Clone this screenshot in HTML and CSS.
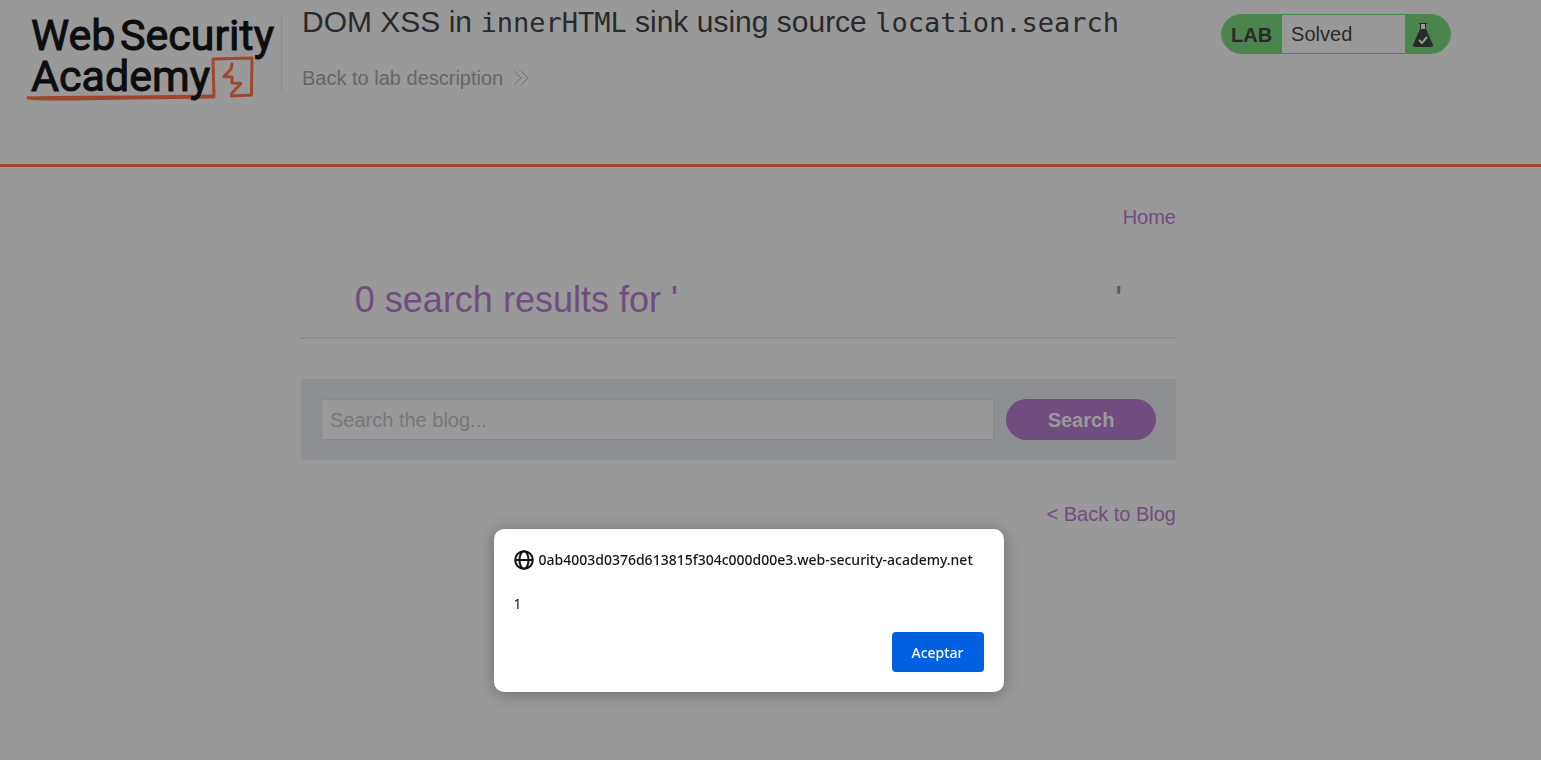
FILE: index.html
```html
<!DOCTYPE html>
<html lang="en">
<head>
<meta charset="utf-8">
<meta name="viewport" content="width=device-width, initial-scale=1">
<title>DOM XSS in innerHTML sink using source location.search</title>
<link rel="stylesheet" href="styles.css">
</head>
<body>
<header class="lab-header">
  <a class="logo" href="#" aria-label="Web Security Academy">
    <svg width="256" height="94" viewBox="0 0 256 94">
      <g class="logo-mark">
        <path d="M4 83.500Q60 82.500 110 82.500L190 81.500" />
        <path d="M4 84Q14 85.500 45 85L110 84L190 83L189 45L228 44L227.500 81L207.500 82L208 79L217 69.500L208 69L208 63L200 62.500L207 55L208 50"/>
      </g>
      <g class="logo-text">
        <text x="7" y="36">Web</text>
        <text x="96" y="36">Security</text>
        <text x="7" y="77">Academy</text>
      </g>
    </svg>
  </a>
  <div class="title-box">
    <h2 class="lab-title">DOM XSS in <code>innerHTML</code> sink using source <code>location.search</code></h2>
    <a class="back-link" href="#">Back to lab description
      <svg width="16" height="16" viewBox="0 0 16 16"><path d="M1 1l7 7-7 7M8 1l7 7-7 7"/></svg>
    </a>
  </div>
  <div class="lab-status">
    <span class="status-label">LAB</span>
    <p class="status-text">Solved</p>
    <span class="status-icon">
      <svg width="22" height="26" viewBox="0 0 22 26">
        <rect class="flask-neck" x="8" y="2" width="6" height="6"/>
        <path class="flask-line" d="M7 1.500h8M8.500 1v7M13.500 1v7"/>
        <path class="flask-body" d="M8 7h6l7 16q0 2-2 2H3q-2 0-2-2z"/>
        <path class="flask-check" d="M7 18l3 3 5-6"/>
      </svg>
    </span>
  </div>
</header>
<main class="content">
  <nav class="nav"><a href="#">Home</a></nav>
  <section class="results-head">
    <h1>0 search results for '<span class="term"></span>'</h1>
  </section>
  <form class="search">
    <input type="text" name="search" placeholder="Search the blog..." aria-label="Search the blog">
    <button type="button">Search</button>
  </form>
  <div class="back-to-blog"><a href="#">&lt; Back to Blog</a></div>
</main>
<div class="alert" role="alertdialog" aria-labelledby="alert-origin" aria-describedby="alert-message">
  <div class="alert-origin">
    <svg width="20" height="20" viewBox="0 0 20 20"><circle cx="10" cy="10" r="8.800"/><ellipse cx="10" cy="10" rx="4.500" ry="8.800"/><path d="M1 10h18"/></svg>
    <span id="alert-origin">0ab4003d0376d613815f304c000d00e3.web-security-academy.net</span>
  </div>
  <p class="alert-message" id="alert-message">1</p>
  <div class="alert-actions"><button type="button">Aceptar</button></div>
</div>
</body>
</html>
```
FILE: styles.css
```css
* { box-sizing: border-box; }

body {
  margin: 0;
  min-height: 100vh;
  background: #99999a;
  color: #29292b;
  font: 20px/24px "Liberation Sans", Arial, sans-serif;
}

a { color: #704d7e; text-decoration: none; }
h1, h2, p { margin: 0; font-weight: normal; }

.lab-header {
  display: flex;
  align-items: flex-start;
  min-height: 167px;
  padding: 14px 90px 0 24px;
  border-bottom: 3px solid #a1462e;
}

.logo {
  flex: none;
  height: 78px;
  padding-right: 1px;
  border-right: 1px solid #8d8d8e;
}
.logo svg { display: block; overflow: visible; }
.logo-text {
  fill: #0d0d0e;
  stroke: #0d0d0e;
  stroke-width: 1;
  font: 43px Roboto, sans-serif;
}
.logo-mark {
  fill: none;
  stroke: #a1462e;
  stroke-width: 2;
  stroke-linejoin: round;
  stroke-linecap: round;
}
.logo-mark path:last-child { stroke-width: 3; }

.title-box { flex: 1; padding-left: 20px; }
.lab-title {
  margin-top: -10px;
  font-size: 30px;
  line-height: 36px;
}
.lab-title code { font-family: "DejaVu Sans Mono", monospace; font-size: 27px; }
.back-link {
  display: inline-flex;
  align-items: center;
  gap: 10px;
  margin-top: 25px;
  color: #66666a;
}
.back-link svg { fill: none; stroke: #707073; }

.lab-status {
  display: flex;
  flex: none;
  width: 230px;
  height: 40px;
  overflow: hidden;
  border: 1px solid #4c844d;
  border-radius: 20px;
  line-height: 38px;
}
.status-label { padding: 1px 10px 0 9px; background: #4c844d; font-weight: bold; }
.status-text { flex: 1; padding-left: 9px; }
.status-icon {
  display: flex;
  width: 45px;
  padding: 7px 0 0 7px;
  background: #4c844d;
}
.flask-neck { fill: #99999a; }
.flask-line { fill: none; stroke: #29292b; stroke-width: 1; }
.flask-body { fill: #29292b; }
.flask-check { fill: none; stroke: #99999a; stroke-width: 2; }

.content { width: 875px; max-width: 100%; margin: 0 auto; translate: -32px; }
.nav { padding-top: 38px; text-align: right; }
.results-head {
  margin-top: 48px;
  padding-bottom: 15px;
  border-bottom: 2px solid #8b8c8e;
  text-align: center;
}
.results-head h1 { color: #704d7e; font-size: 36px; line-height: 45px; }
.term { display: inline-block; width: 50%; }

.search {
  display: flex;
  gap: 12px;
  margin-top: 40px;
  padding: 20px;
  background: #8d8f93;
}
.search input {
  flex: 1;
  min-width: 0;
  height: 41px;
  padding: 1px 8px 0;
  border: 1px solid #88898c;
  background: #99999a;
  color: #29292b;
  font: inherit;
}
.search input::placeholder { color: #77777a; opacity: 1; }
.search button {
  width: 150px;
  border: 0;
  border-radius: 21px;
  background: #704d7e;
  color: #99999a;
  font: bold 20px/24px "Liberation Sans", Arial, sans-serif;
}
.back-to-blog { margin-top: 42px; text-align: right; }

.alert {
  position: fixed;
  top: 529px;
  left: calc(50% - 277px);
  width: 510px;
  padding: 20px;
  border-radius: 10px;
  background: #fff;
  box-shadow: 0 2px 16px rgba(0, 0, 0, 0.3);
  color: #15141a;
  font: 14px/21px "Noto Sans", sans-serif;
}
.alert-origin { display: flex; align-items: center; gap: 5px; font-weight: 500; white-space: nowrap; }
.alert-origin svg { flex: none; fill: none; stroke: #15141a; stroke-width: 2; }
.alert-message { margin-top: 23px; }
.alert-actions { display: flex; justify-content: flex-end; margin-top: 18px; }
.alert-actions button {
  width: 92px;
  height: 40px;
  border: 0;
  border-radius: 4px;
  background: #0060df;
  color: #fff;
  font: 500 14px "Noto Sans", sans-serif;
}
```
